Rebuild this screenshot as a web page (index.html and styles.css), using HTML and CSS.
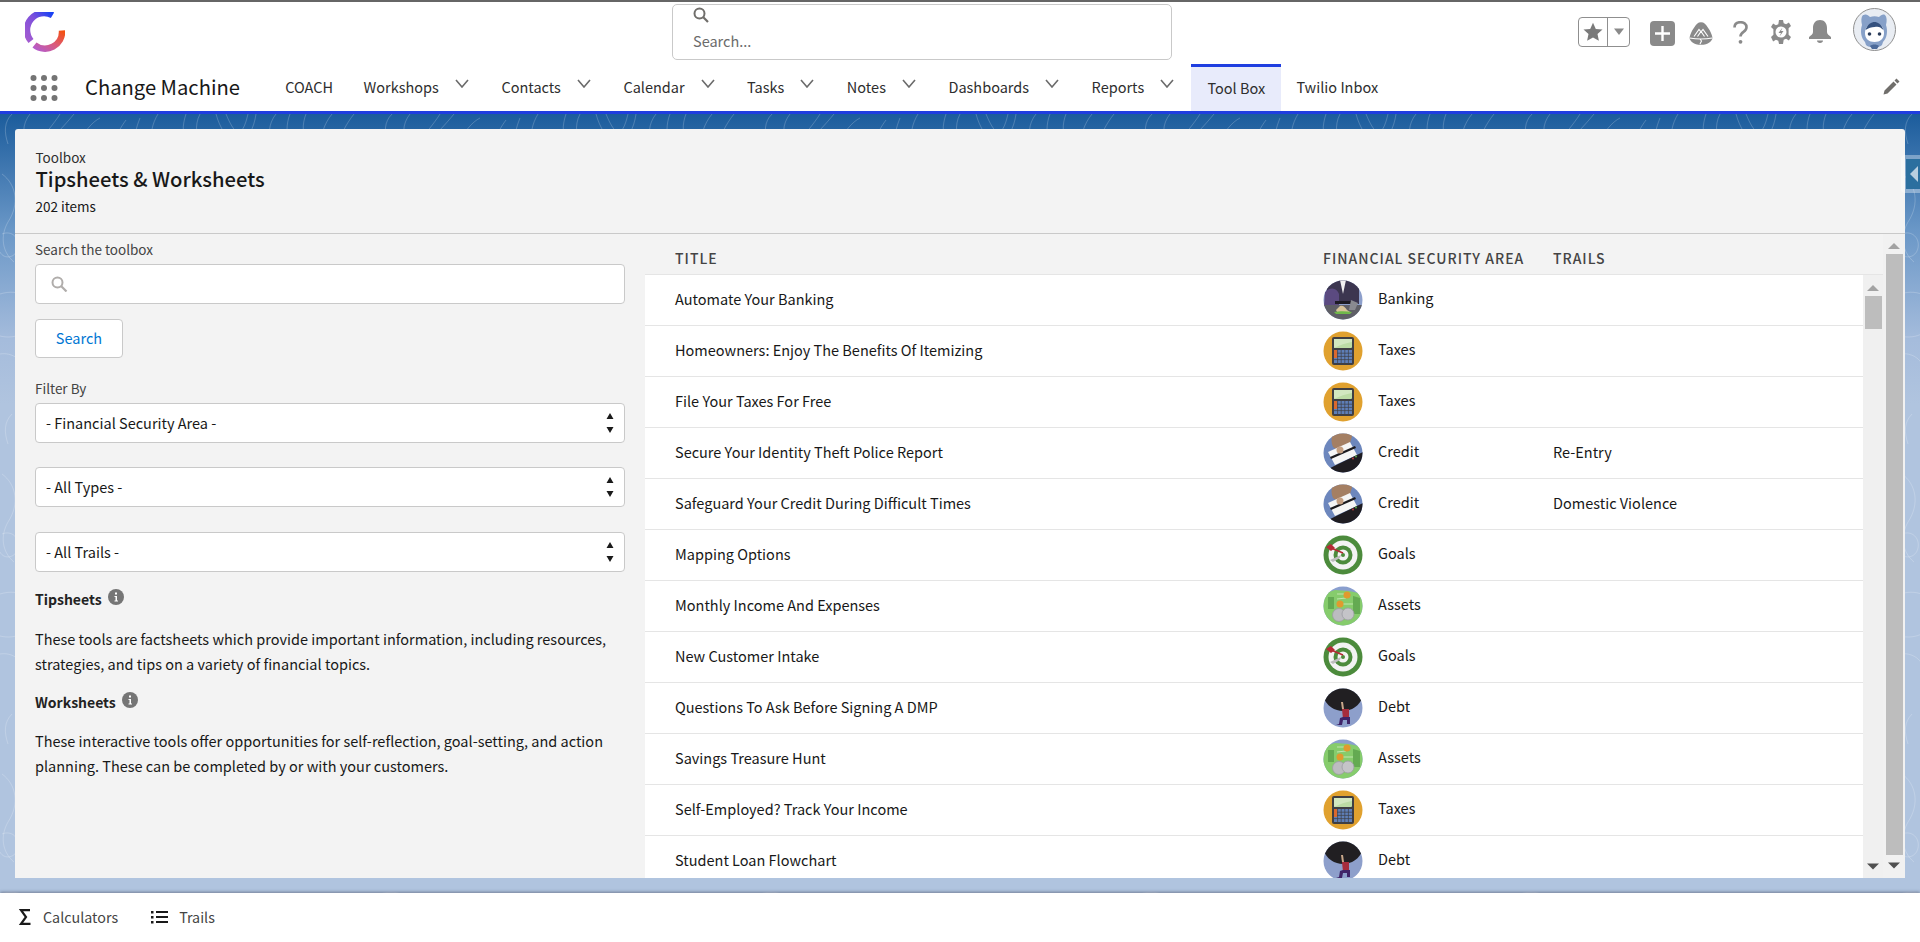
FILE: index.html
```html
<!DOCTYPE html>
<html lang="en">
<head>
    <meta charset="UTF-8">
    <title>Tipsheets &amp; Worksheets</title>
    <link rel="stylesheet" href="styles.css">
</head>
<body>
    <svg class="defs" width="0" height="0">
        <defs>
            <linearGradient id="logoA" x1="1" y1="0" x2="0" y2="1">
                <stop offset="0" stop-color="#1240f5"/>
                <stop offset="0.45" stop-color="#7d50dc"/>
                <stop offset="1" stop-color="#a45cd0"/>
            </linearGradient>
            <linearGradient id="logoB" x1="1" y1="0" x2="0" y2="1">
                <stop offset="0" stop-color="#f4500f"/>
                <stop offset="0.5" stop-color="#dc5a78"/>
                <stop offset="1" stop-color="#b45ccc"/>
            </linearGradient>
            <clipPath id="avClip"><circle cx="20" cy="20" r="19.5"/></clipPath>
            <pattern id="contours" width="380" height="300" patternUnits="userSpaceOnUse">
                <g fill="none" stroke="#fff" stroke-opacity=".2" stroke-width="1">
                    <path d="M12 0c-8 8-8 18-4 30M30 0c-8 10-8 22-2 34M60 0c-6 10-16 20-24 34M74 0c-8 10-20 22-30 34M100 4c-8 4-16 14-22 26M126 6c-6 8-10 16-12 26M140 4c-4 10-6 18-4 28M158 0c-6 10-8 20-6 32"/>
                    <path d="M186 0c-4 12-4 22 2 32M200 0c-6 12-4 24 4 32M216 0c4 14 10 24 22 32c10-6 16-18 18-32M226 0c4 10 8 16 12 20c6-4 8-12 10-20M276 0c-8 10-8 22-4 32M290 0c-4 10-4 22 0 32M306 0c-4 10-4 22 2 32M332 0c-8 10-12 22-10 32M354 0c-8 10-14 22-16 32"/>
                    <path d="M2 60c14 10 18 30 6 48c-8 14-6 30 6 40M2 120c10-4 18 4 16 14c-2 10-14 12-18 4M0 180c20-6 34 4 34 20c0 18-18 26-34 22M0 240c12-2 24 6 24 18"/>
                    <path d="M360 40c-14 8-20 20-16 36c4 16-4 28-16 34M380 90c-14 4-24 14-22 30c2 18 10 26 22 30M340 190c18-8 36-4 40 10M346 240c14-6 28-4 34 4"/>
                </g>
            </pattern>
            <symbol id="avBanking" viewBox="0 0 40 40">
                <g clip-path="url(#avClip)">
                    <rect width="40" height="40" fill="#8d9fcb"/>
                    <path d="M5 0h31v24H2z" fill="#3c3650"/>
                    <path d="M2 12c6-6 12-4 14 2v12H1z" fill="#5b4a80"/>
                    <path d="M17 0h6l-3 14z" fill="#f1f1f1"/>
                    <path d="M12 21h16v3H12z" fill="#1d1b24"/>
                    <path d="M0 25h40v15H0z" fill="#5f5f66"/>
                    <path d="M28 20l7 3-3 7h-6z" fill="#8a8a90"/>
                    <path d="M13 30l4-4c3-1 5 1 7 4l3 2H14z" fill="#d7c39a"/>
                    <path d="M11 32c5-1 12-1 18 0l-2 2H13z" fill="#70b84a"/>
                </g>
            </symbol>
            <symbol id="avTaxes" viewBox="0 0 40 40">
                <g clip-path="url(#avClip)">
                    <rect width="40" height="40" fill="#e0a12f"/>
                    <rect x="9" y="6" width="22" height="28" rx="2" fill="#3f3f44"/>
                    <rect x="11" y="8" width="18" height="9" rx="1" fill="#bcdca5"/>
                    <path d="M11 8h18v3c-6 1-12 3-18 6z" fill="#d2e8c0"/>
                    <rect x="11" y="19" width="18" height="13" fill="#5e7fb8"/>
                    <path d="M11 22.200h18M11 25.400h18M11 28.600h18M14.600 19v13M18.200 19v13M21.800 19v13M25.400 19v13" stroke="#3f3f44" stroke-width=".7"/>
                    <rect x="11" y="19" width="3" height="8" fill="#d9692e"/>
                </g>
            </symbol>
            <symbol id="avCredit" viewBox="0 0 40 40">
                <g clip-path="url(#avClip)">
                    <rect width="40" height="40" fill="#6d87bd"/>
                    <path d="M10 0h20l-3 10-11 8-6-4c-2-4-2-9 0-14z" fill="#a47f63"/>
                    <path d="M5 19l22-10 7 13-22 10z" fill="#f5f5f5"/>
                    <path d="M7 24l25-11 1 2-25 11z" fill="#1b1a1e"/>
                    <circle cx="17" cy="17" r="3.500" fill="#c49f82"/>
                    <path d="M3 37l37-18v21H3z" fill="#1f1d22"/>
                    <circle cx="33" cy="23.500" r=".9" fill="#65b54a"/>
                    <circle cx="30" cy="25.500" r=".9" fill="#c9403f"/>
                </g>
            </symbol>
            <symbol id="avGoals" viewBox="0 0 40 40">
                <g clip-path="url(#avClip)">
                    <rect width="40" height="40" fill="#4c8b3c"/>
                    <circle cx="20" cy="20" r="14.500" fill="#f3f3f3"/>
                    <circle cx="20" cy="20" r="9.500" fill="#4c8b3c"/>
                    <circle cx="20" cy="20" r="5.500" fill="#f3f3f3"/>
                    <circle cx="20" cy="20" r="2" fill="#4c8b3c"/>
                    <path d="M7 25l11-5-1 3-7 4z" fill="#bdbdbd"/>
                    <path d="M8 13l12 5" stroke="#b52a35" stroke-width="1.500"/>
                    <path d="M3 12l5-3 4 4-4 3z" fill="#b52a35"/>
                </g>
            </symbol>
            <symbol id="avAssets" viewBox="0 0 40 40">
                <g clip-path="url(#avClip)">
                    <rect width="40" height="40" fill="#8a9fce"/>
                    <path d="M0 8l12-4 14 1 14 3v32H0z" fill="#86cc6c"/>
                    <path d="M5 11h6v12H5zM30 10l7 2v16h-7z" fill="#64aa52"/>
                    <path d="M14 8l12 0M14 13l9-1M14 18h16" stroke="#bfe6ae" stroke-width="1.200"/>
                    <circle cx="24" cy="9" r="3.500" fill="#e09a2e"/>
                    <circle cx="17" cy="18" r="3.500" fill="#e09a2e"/>
                    <circle cx="16" cy="29" r="6.500" fill="#bcbcc0" stroke="#9d9da3" stroke-width=".8"/>
                    <circle cx="25" cy="28" r="6" fill="#c4c4c8" stroke="#9d9da3" stroke-width=".8"/>
                </g>
            </symbol>
            <symbol id="avDebt" viewBox="0 0 40 40">
                <g clip-path="url(#avClip)">
                    <rect width="40" height="40" fill="#8d9fcb"/>
                    <path d="M0 0h40v8c-3 10-12 15-20 15S3 18 0 8z" fill="#211f22"/>
                    <path d="M18 14h2l1 7h-2z" fill="#c9a78a"/>
                    <path d="M19 21h7v10h-6z" fill="#a62c3c"/>
                    <path d="M20 29h7v7h-3v-4h-4l-1 5h-6l3-1 1-6z" fill="#3f2468"/>
                </g>
            </symbol>
        </defs>
    </svg>

    <header class="top-bar">
        <svg class="logo" viewBox="0 0 40 40">
            <path d="M27.500 3.300A17 17 0 0 0 6 29" fill="none" stroke="url(#logoA)" stroke-width="6.500"/>
            <path d="M37 18.500A17 17 0 0 1 9.500 33" fill="none" stroke="url(#logoB)" stroke-width="6.500"/>
        </svg>
        <div class="global-search">
            <svg class="global-search-icon" viewBox="0 0 16 16"><circle cx="6.500" cy="6.500" r="5" fill="none" stroke="#706e6b" stroke-width="2"/><path d="M10.300 10.300L15 15" stroke="#706e6b" stroke-width="2.200"/></svg>
            <span class="global-search-text">Search...</span>
        </div>
        <div class="top-actions">
            <div class="fav-group">
                <div class="fav-star"><svg width="20" height="20" viewBox="0 0 20 20"><path d="M10 .800l2.800 6.100 6.700.700-5 4.500 1.400 6.600L10 15.400l-5.900 3.300 1.400-6.600-5-4.500 6.700-.700z" fill="#7a7a7a"/></svg></div>
                <div class="fav-more"><svg width="12" height="8" viewBox="0 0 12 8"><path d="M1 .500h10L6 7z" fill="#8a8a8a"/></svg></div>
            </div>
            <svg class="act-add" width="25" height="25" viewBox="0 0 25 25"><rect width="25" height="25" rx="4" fill="#8a8a8a"/><path d="M12.500 5v15M5 12.500h15" stroke="#fff" stroke-width="2.400"/></svg>
            <svg class="act-trail" width="24" height="23" viewBox="0 0 24 23"><path d="M12 .200c3 0 5 2 7 5.500 2.500 3.500 4 7 4.500 10.300-.5 3-4 6.800-11.500 6.800S1 19 .500 16C1 12.700 2.500 9.200 5 5.700 7 2.200 9 .200 12 .200z" fill="#8a8a8a"/><path d="M5 14.500l5-7 2 2.500 2-2.500 5 7M8.500 14.500l3.500-5 3.500 5M.500 16c7 1.200 16 1.200 23 0M11 17l1.500 2-1.500 3" fill="none" stroke="#fff" stroke-width="1.100"/></svg>
            <svg class="act-help" width="15" height="23" viewBox="0 0 15 23"><path d="M1.500 6.500C1.500 3 4 1.200 7.500 1.200s6 2 6 5c0 2.400-1.300 3.500-3 4.700-2 1.400-3 2.400-3 4.600" fill="none" stroke="#8a8a8a" stroke-width="2.600"/><circle cx="7.500" cy="20.800" r="1.900" fill="#8a8a8a"/></svg>
            <svg class="act-gear" width="22" height="24" viewBox="0 0 22 24"><path d="M9 0h4l.7 3.200 2.400 1 2.800-1.700 2.100 3.500-2.400 2.200v6.600l2.400 2.200-2.100 3.500-2.800-1.700-2.400 1L13 24H9l-.7-3.200-2.400-1-2.800 1.700L1 17l2.400-2.200V9.200L1 7l2.100-3.500 2.800 1.700 2.400-1z" fill="#8a8a8a"/><circle cx="11" cy="12" r="5.500" fill="#fff"/><path d="M12.500 7.500L8.500 13h2.500l-1.500 3.500 4-5.500H11z" fill="#8a8a8a"/></svg>
            <svg class="act-bell" width="24" height="23" viewBox="0 0 24 23"><path d="M12 0c4.500 0 7 3.500 7 8v4c0 2 2 3.500 4 5v2H1v-2c2-1.500 4-3 4-5V8c0-4.500 2.500-8 7-8z" fill="#8a8a8a"/><path d="M9 20.500h6c0 1.500-1.200 2.500-3 2.500s-3-1-3-2.500z" fill="#8a8a8a"/></svg>
            <svg class="act-user" width="43" height="43" viewBox="0 0 43 43"><circle cx="21.500" cy="21.500" r="21" fill="#e9edf3" stroke="#8f8f8f"/><path d="M11 7c2-1 4 0 6 2 3-1 6-1 9 0 2-2 4-3 6-2 2 2 2 6 1 10 2 6 1 13-3 17l-1 3c-2 3-14 3-16 0l-1-3c-4-4-5-11-3-17-1-4-1-8 1-10z" fill="#86a0c8"/><path d="M12 25c0-6 4-10 9.500-10S31 19 31 25s-4 9-9.500 9S12 31 12 25z" fill="#fff"/><path d="M12.500 22c2-6 6-8 9-8s7 2 9 8c-3-3-5-4-9-3-3 0-6 1-9 3z" fill="#34517f"/><circle cx="16.500" cy="26" r="1.800" fill="#2c3e5c"/><circle cx="26.500" cy="26" r="1.800" fill="#2c3e5c"/><path d="M17 38c2-2 7-2 9 0l-2 3h-5z" fill="#4c6a9a"/></svg>
        </div>
    </header>

    <nav class="nav-bar">
        <svg class="waffle" width="28" height="26" viewBox="0 0 28 26" fill="#747474">
            <circle cx="3.500" cy="3" r="3"/><circle cx="14" cy="3" r="3"/><circle cx="24.500" cy="3" r="3"/>
            <circle cx="3.500" cy="13" r="3"/><circle cx="14" cy="13" r="3"/><circle cx="24.500" cy="13" r="3"/>
            <circle cx="3.500" cy="23" r="3"/><circle cx="14" cy="23" r="3"/><circle cx="24.500" cy="23" r="3"/>
        </svg>
        <span class="app-name">Change Machine</span>
        <ul class="nav-list">
            <li class="nav-item"><span>COACH</span></li>
            <li class="nav-item"><span>Workshops</span><svg class="chev" viewBox="0 0 14 9"><path d="M1 1l6 7 6-7" fill="none" stroke="#6b6b6b" stroke-width="1.600"/></svg></li>
            <li class="nav-item"><span>Contacts</span><svg class="chev" viewBox="0 0 14 9"><path d="M1 1l6 7 6-7" fill="none" stroke="#6b6b6b" stroke-width="1.600"/></svg></li>
            <li class="nav-item"><span>Calendar</span><svg class="chev" viewBox="0 0 14 9"><path d="M1 1l6 7 6-7" fill="none" stroke="#6b6b6b" stroke-width="1.600"/></svg></li>
            <li class="nav-item"><span>Tasks</span><svg class="chev" viewBox="0 0 14 9"><path d="M1 1l6 7 6-7" fill="none" stroke="#6b6b6b" stroke-width="1.600"/></svg></li>
            <li class="nav-item"><span>Notes</span><svg class="chev" viewBox="0 0 14 9"><path d="M1 1l6 7 6-7" fill="none" stroke="#6b6b6b" stroke-width="1.600"/></svg></li>
            <li class="nav-item"><span>Dashboards</span><svg class="chev" viewBox="0 0 14 9"><path d="M1 1l6 7 6-7" fill="none" stroke="#6b6b6b" stroke-width="1.600"/></svg></li>
            <li class="nav-item"><span>Reports</span><svg class="chev" viewBox="0 0 14 9"><path d="M1 1l6 7 6-7" fill="none" stroke="#6b6b6b" stroke-width="1.600"/></svg></li>
            <li class="nav-item active"><span>Tool Box</span></li>
            <li class="nav-item"><span>Twilio Inbox</span></li>
        </ul>
        <svg class="nav-edit" width="17" height="17" viewBox="0 0 17 17"><path d="M13.500.500l3 3-2 2-3-3zM10.500 3.500l3 3-9 9-4 1 1-4z" fill="#706e6b"/></svg>
    </nav>

    <main class="stage">
        <svg class="stage-lines" width="1920" height="800"><rect width="1920" height="800" fill="url(#contours)"/></svg>
        <div class="side-handle"><div class="side-handle-inner"><svg width="8" height="16" viewBox="0 0 8 16"><path d="M8 0v16L0 8z" fill="#b9cfe0"/></svg></div></div>
        <div class="panel">
            <div class="panel-head">
                <div class="crumb">Toolbox</div>
                <h1 class="panel-title">Tipsheets &amp; Worksheets</h1>
                <div class="crumb-count">202 items</div>
            </div>
            <div class="panel-body">
                <aside class="sidebar">
                    <div class="field-label">Search the toolbox</div>
                    <div class="text-box">
                        <svg width="17" height="16" viewBox="0 0 17 16"><circle cx="6.500" cy="6.500" r="5" fill="none" stroke="#b0adab" stroke-width="2"/><path d="M10.300 10.300L15.500 15.500" stroke="#b0adab" stroke-width="2.200"/></svg>
                    </div>
                    <button class="search-btn">Search</button>
                    <div class="field-label filter-label">Filter By</div>
                    <div class="select-box">- Financial Security Area -<svg class="select-arrows" width="8" height="20" viewBox="0 0 8 20"><path d="M4 0l3.500 6h-7zM4 20L.500 14h7z" fill="#1a1a1a"/></svg></div>
                    <div class="select-box spaced">- All Types -<svg class="select-arrows" width="8" height="20" viewBox="0 0 8 20"><path d="M4 0l3.500 6h-7zM4 20L.500 14h7z" fill="#1a1a1a"/></svg></div>
                    <div class="select-box spaced-more">- All Trails -<svg class="select-arrows" width="8" height="20" viewBox="0 0 8 20"><path d="M4 0l3.500 6h-7zM4 20L.500 14h7z" fill="#1a1a1a"/></svg></div>
                    <h2 class="info-head first">Tipsheets<svg class="info-icon" width="16" height="16" viewBox="0 0 16 16"><circle cx="8" cy="8" r="8" fill="#757575"/><path d="M7 3.500h2v2H7zM6.500 7h2.500v4.500h1v1H6.500v-1h1V8h-1z" fill="#fff"/></svg></h2>
                    <p class="info-text">These tools are factsheets which provide important information, including resources, strategies, and tips on a variety of financial topics.</p>
                    <h2 class="info-head">Worksheets<svg class="info-icon" width="16" height="16" viewBox="0 0 16 16"><circle cx="8" cy="8" r="8" fill="#757575"/><path d="M7 3.500h2v2H7zM6.500 7h2.500v4.500h1v1H6.500v-1h1V8h-1z" fill="#fff"/></svg></h2>
                    <p class="info-text">These interactive tools offer opportunities for self-reflection, goal-setting, and action planning. These can be completed by or with your customers.</p>
                </aside>
                <section class="results">
                    <div class="results-head">
                        <span>Title</span>
                        <span>Financial Security Area</span>
                        <span>Trails</span>
                    </div>
                    <div class="results-main">
                        <div class="rows">
                            <div class="row"><span>Automate Your Banking</span><span class="area"><svg class="avatar"><use href="#avBanking"/></svg>Banking</span><span></span></div>
                            <div class="row"><span>Homeowners: Enjoy The Benefits Of Itemizing</span><span class="area"><svg class="avatar"><use href="#avTaxes"/></svg>Taxes</span><span></span></div>
                            <div class="row"><span>File Your Taxes For Free</span><span class="area"><svg class="avatar"><use href="#avTaxes"/></svg>Taxes</span><span></span></div>
                            <div class="row"><span>Secure Your Identity Theft Police Report</span><span class="area"><svg class="avatar"><use href="#avCredit"/></svg>Credit</span><span>Re-Entry</span></div>
                            <div class="row"><span>Safeguard Your Credit During Difficult Times</span><span class="area"><svg class="avatar"><use href="#avCredit"/></svg>Credit</span><span>Domestic Violence</span></div>
                            <div class="row"><span>Mapping Options</span><span class="area"><svg class="avatar"><use href="#avGoals"/></svg>Goals</span><span></span></div>
                            <div class="row"><span>Monthly Income And Expenses</span><span class="area"><svg class="avatar"><use href="#avAssets"/></svg>Assets</span><span></span></div>
                            <div class="row"><span>New Customer Intake</span><span class="area"><svg class="avatar"><use href="#avGoals"/></svg>Goals</span><span></span></div>
                            <div class="row"><span>Questions To Ask Before Signing A DMP</span><span class="area"><svg class="avatar"><use href="#avDebt"/></svg>Debt</span><span></span></div>
                            <div class="row"><span>Savings Treasure Hunt</span><span class="area"><svg class="avatar"><use href="#avAssets"/></svg>Assets</span><span></span></div>
                            <div class="row"><span>Self-Employed? Track Your Income</span><span class="area"><svg class="avatar"><use href="#avTaxes"/></svg>Taxes</span><span></span></div>
                            <div class="row"><span>Student Loan Flowchart</span><span class="area"><svg class="avatar"><use href="#avDebt"/></svg>Debt</span><span></span></div>
                        </div>
                        <div class="scrollbar inner-scroll">
                            <svg class="scroll-arrow" width="14" height="7" viewBox="0 0 14 7"><path d="M7 1l6 6H1z" fill="#a3a3a3"/></svg>
                            <div class="scroll-thumb"></div>
                            <svg class="scroll-arrow down" width="14" height="7" viewBox="0 0 14 7"><path d="M7 6.500L1 .500h12z" fill="#505050"/></svg>
                        </div>
                    </div>
                </section>
                <div class="scrollbar outer-scroll">
                    <svg class="scroll-arrow" width="14" height="7" viewBox="0 0 14 7"><path d="M7 1l6 6H1z" fill="#a3a3a3"/></svg>
                    <div class="scroll-thumb"></div>
                    <svg class="scroll-arrow down" width="14" height="7" viewBox="0 0 14 7"><path d="M7 6.500L1 .500h12z" fill="#505050"/></svg>
                </div>
            </div>
        </div>
    </main>

    <footer class="util-bar">
        <div class="util-item"><svg width="14" height="18" viewBox="0 0 14 18"><path d="M12 2.200H3l5 6.800-5 6.800h9.500" fill="none" stroke="#1a1a1a" stroke-width="2.200"/></svg><span>Calculators</span></div>
        <div class="util-item"><svg width="17" height="13" viewBox="0 0 17 13" fill="#1a1a1a"><rect y="0" width="2.500" height="2.500"/><rect y="5" width="2.500" height="2.500"/><rect y="10" width="2.500" height="2.500"/><rect x="5" y="0" width="12" height="2"/><rect x="5" y="5" width="12" height="2"/><rect x="5" y="10" width="12" height="2"/></svg><span>Trails</span></div>
    </footer>
</body>
</html>
```

FILE: styles.css
```css
* {
    box-sizing: border-box;
}
html, body {
    height: 100%;
}
body {
    margin: 0;
    display: flex;
    flex-direction: column;
    height: 942px;
    overflow: hidden;
    font-family: "Noto Sans CJK SC", "Noto Sans", sans-serif;
    font-size: 14.500px;
    line-height: 20px;
    color: #181818;
    background: #fff;
}
.defs {
    position: absolute;
}

/* top bar */
.top-bar {
    display: grid;
    grid-template-columns: 672px 500px 1fr;
    height: 64px;
    border-top: 2px solid #666;
    background: #fff;
}
.logo {
    width: 40px;
    height: 40px;
    margin: 10px 0 0 25px;
}
.global-search {
    height: 56px;
    margin-top: 2px;
    padding-left: 20px;
    border: 1px solid #c9c9c9;
    border-radius: 5px;
    display: flex;
    flex-direction: column;
}
.global-search-icon {
    width: 16px;
    height: 16px;
    margin-top: 2px;
}
.global-search-text {
    margin-top: 8px;
    color: #6b6b6b;
}
.top-actions {
    display: flex;
    align-items: flex-start;
    padding-left: 406px;
}
.fav-group {
    display: flex;
    width: 52px;
    height: 30px;
    margin-top: 15px;
    border: 1px solid #8f8f8f;
    border-radius: 4px;
}
.fav-star {
    width: 29px;
    display: flex;
    align-items: center;
    justify-content: center;
    border-right: 1px solid #8f8f8f;
}
.fav-more {
    flex: 1;
    display: flex;
    align-items: center;
    justify-content: center;
}
.act-add {
    margin: 19px 0 0 20px;
}
.act-trail {
    margin: 20px 0 0 14px;
}
.act-help {
    margin: 19px 0 0 20px;
}
.act-gear {
    margin: 18px 0 0 22px;
}
.act-bell {
    margin: 18px 0 0 16px;
}
.act-user {
    margin: 6px 0 0 21px;
}

/* app nav */
.nav-bar {
    display: flex;
    align-items: center;
    height: 50px;
    padding: 0 20px 0 30px;
    background: #fff;
    border-bottom: 3px solid #1f3ee0;
}
.app-name {
    margin-left: 27px;
    padding-bottom: 2px;
    font-size: 20.200px;
    white-space: nowrap;
}
.nav-list {
    display: flex;
    flex: 1;
    height: 47px;
    margin: 0 0 0 30px;
    padding: 0;
    list-style: none;
}
.nav-item {
    display: flex;
    align-items: center;
    padding: 0 15.250px 2px;
    white-space: nowrap;
    color: #2e2e2e;
}
.nav-item.active {
    padding: 0 16px 2px;
    background: #e8ebfb;
    border-top: 3px solid #1f3ee0;
}
.chev {
    width: 14px;
    height: 9px;
    margin: -7px 2px 0 16px;
}
.nav-edit {
    margin-bottom: 2px;
}

/* content area */
.stage {
    position: relative;
    flex: 1;
    padding: 15px 15px;
    min-height: 0;
    background: linear-gradient(#1b5c9c 0, #6a97c7 116px, #a5bcdc 226px, #b0c4df 290px);
}
.stage-lines {
    position: absolute;
    left: 0;
    top: 0;
}
.side-handle {
    position: absolute;
    z-index: 1;
    right: 0;
    top: 41px;
    width: 19px;
    height: 38px;
    padding: 4px 0 0 5px;
    background: rgba(255, 255, 255, 0.35);
    border-radius: 4px 0 0 4px;
}
.side-handle-inner {
    display: flex;
    align-items: center;
    justify-content: flex-end;
    height: 30px;
    padding-right: 2px;
    background: #2b6f9f;
}
.panel {
    position: relative;
    display: flex;
    flex-direction: column;
    height: 100%;
    background: #f3f3f3;
    border-radius: 3px 3px 0 0;
}
.panel-head {
    height: 105px;
    padding: 18px 20.500px 0;
    border-bottom: 1px solid #c9c9c9;
}
.crumb {
    font-size: 13.500px;
    color: #2e2e2e;
}
.panel-title {
    margin: -1px 0 0;
    font-size: 20.200px;
    line-height: 26px;
    font-weight: 500;
}
.crumb-count {
    margin-top: 4px;
    font-size: 13.500px;
}
.panel-body {
    display: flex;
    flex: 1;
    min-height: 0;
}

/* left column */
.sidebar {
    width: 630px;
    padding: 5px 20px 0;
}
.field-label {
    font-size: 13.500px;
    color: #444;
}
.filter-label {
    margin-top: 20px;
}
.text-box {
    display: flex;
    align-items: center;
    height: 40px;
    margin-top: 5px;
    padding-left: 15px;
    background: #fff;
    border: 1px solid #c9c9c9;
    border-radius: 4px;
}
.search-btn {
    display: block;
    width: 88px;
    height: 39px;
    margin-top: 15px;
    padding-bottom: 3px;
    font-family: inherit;
    font-size: 14.500px;
    color: #0176d3;
    background: #fff;
    border: 1px solid #c9c9c9;
    border-radius: 4px;
}
.select-box {
    position: relative;
    display: flex;
    align-items: center;
    height: 40px;
    margin-top: 5px;
    padding-left: 10px;
    background: #fff;
    border: 1px solid #c9c9c9;
    border-radius: 4px;
}
.select-box.spaced {
    margin-top: 24px;
}
.select-box.spaced-more {
    margin-top: 25px;
}
.select-arrows {
    position: absolute;
    right: 10px;
    top: 9px;
}
.info-head {
    margin: 16px 0 0;
    font-size: 14px;
    line-height: 20px;
    font-weight: 700;
    color: #222;
}
.info-head.first {
    margin-top: 17px;
}
.info-icon {
    margin: 0 0 0 6px;
    vertical-align: 0;
}
.info-text {
    margin: 16.500px 0 0;
    line-height: 25px;
}

/* results table */
.results {
    display: flex;
    flex-direction: column;
    flex: 1;
    min-width: 0;
}
.results-head {
    display: grid;
    grid-template-columns: 648px 230px 1fr;
    height: 40px;
    padding: 14px 0 0 30px;
    font-size: 14px;
    font-weight: 500;
    letter-spacing: 1px;
    text-transform: uppercase;
    color: #444;
}
.results-main {
    display: flex;
    flex: 1;
    min-height: 0;
}
.rows {
    flex: 1;
    overflow: hidden;
    background: #fff;
}
.row {
    display: grid;
    grid-template-columns: 648px 230px 1fr;
    align-items: center;
    height: 51px;
    padding: 0 0 2px 30px;
    border-top: 1px solid #e5e5e5;
    color: #181818;
}
.area {
    display: flex;
    align-items: center;
    margin-top: -2px;
}
.avatar {
    width: 40px;
    height: 40px;
    margin: 4px 15px 0 0;
}

/* scrollbars */
.scrollbar {
    display: flex;
    flex-direction: column;
    align-items: center;
    background: #f0f0f0;
}
.inner-scroll {
    width: 20px;
    padding-top: 9px;
    border-top: 1px solid #e5e5e5;
}
.inner-scroll .scroll-thumb {
    width: 17px;
    height: 33px;
    margin-top: 5px;
}
.inner-scroll .scroll-arrow.down {
    margin-top: auto;
    margin-bottom: 8px;
}
.outer-scroll {
    width: 22px;
    padding-top: 8px;
    background: #f1f1f1;
}
.outer-scroll .scroll-thumb {
    width: 17px;
    height: 601px;
    margin-top: 5px;
}
.outer-scroll .scroll-arrow.down {
    margin-top: 7px;
}
.scroll-thumb {
    background: #bdbdbd;
}

/* footer */
.util-bar {
    position: relative;
    display: flex;
    align-items: center;
    gap: 33px;
    height: 49px;
    padding: 0 0 1px 18px;
    background: #fff;
    box-shadow: 0 -1px 3px rgba(40, 40, 60, 0.45);
    color: #444;
    font-size: 14.300px;
}
.util-item {
    display: flex;
    align-items: center;
    gap: 11px;
}
```
